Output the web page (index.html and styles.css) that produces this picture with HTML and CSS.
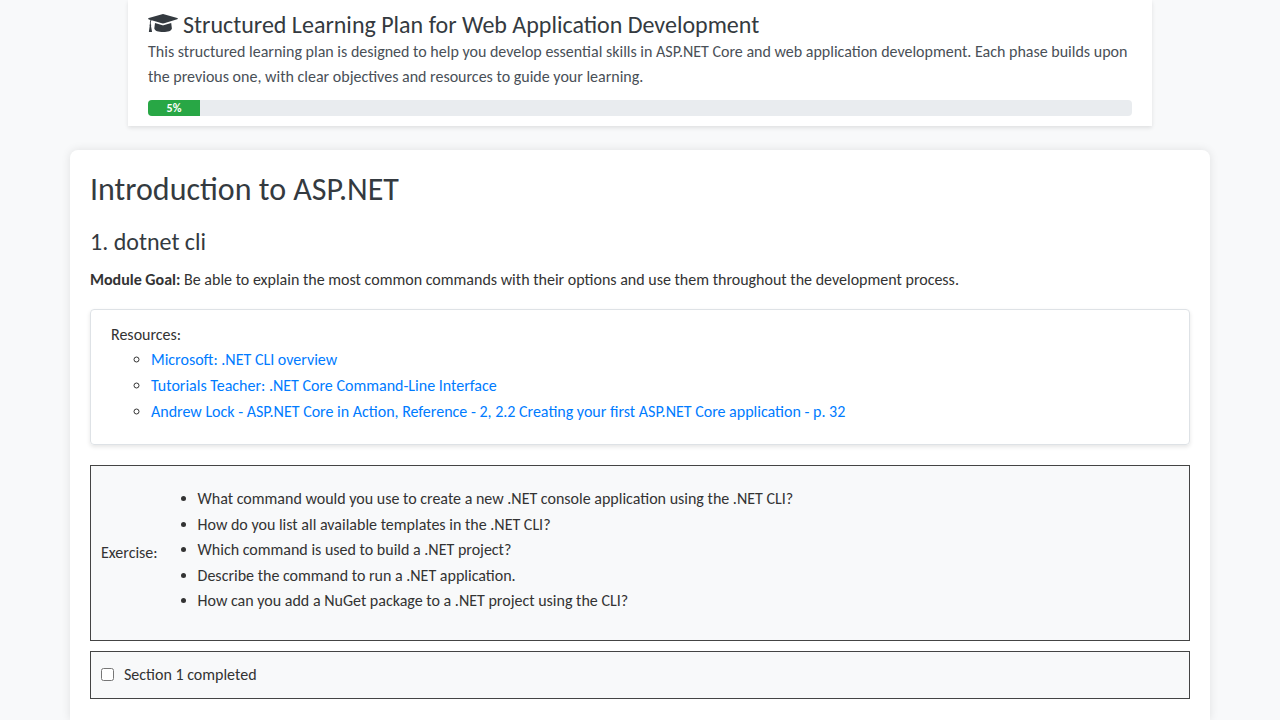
FILE: index.html
```html
<!DOCTYPE html>
<html lang="en">
<head>
<meta charset="utf-8">
<title>Structured Learning Plan</title>
<link rel="stylesheet" href="styles.css">
</head>
<body>
<header class="header">
  <h1 class="title"><svg class="cap" viewBox="0 0 30 20" aria-hidden="true"><g fill="currentColor"><path d="M14.100.2Q15 0 15.900.2L29.200 4.100Q30.500 4.700 29.200 5.300L16.200 9.300Q15 9.600 13.800 9.300L3.600 6.300Q2.900 7 2.800 8.200V10.200Q3.600 10.900 3 11.900L4 17.500Q4 18 3.500 18H1.400Q.8 18 .9 17.500L1.700 11.900Q1.200 10.900 1.900 10.200V8.100Q2 6.900 2.500 6L.8 5.400Q-.5 4.700.8 4.100Z"/><path d="M7 9L13.700 11Q15 11.400 16.300 11L23.200 9 23.900 14.400C23.500 16.700 20 18 15.200 18S6.700 16.700 6.300 14.400Z"/></g></svg><span>Structured Learning Plan for Web Application Development</span></h1>
  <p class="intro"><span class="intro-a">This structured learning plan is designed to help you develop essential skills in ASP.NET Core and web application development. Each phase builds upon</span><br><span class="intro-b">the previous one, with clear objectives and resources to guide your learning.</span></p>
  <div class="progress"><div class="bar">5%</div></div>
</header>
<main class="container">
  <h2 class="section-title"><span>Introduction to ASP.NET</span></h2>
  <h3 class="module-title"><span>1. dotnet cli</span></h3>
  <p class="goal"><strong>Module Goal:</strong> <span>Be able to explain the most common commands with their options and use them throughout the development process.</span></p>
  <section class="card">
    <span class="label">Resources:</span>
    <ul class="resources">
      <li><a>Microsoft: .NET CLI overview</a></li>
      <li><a>Tutorials Teacher: .NET Core Command-Line Interface</a></li>
      <li><a>Andrew Lock - ASP.NET Core in Action, Reference - 2, 2.2 Creating your first ASP.NET Core application - p. 32</a></li>
    </ul>
  </section>
  <section class="box exercise">
    <span class="label">Exercise:</span>
    <ul class="questions">
      <li><span>What command would you use to create a new .NET console application using the .NET CLI?</span></li>
      <li><span>How do you list all available templates in the .NET CLI?</span></li>
      <li><span>Which command is used to build a .NET project?</span></li>
      <li><span>Describe the command to run a .NET application.</span></li>
      <li><span>How can you add a NuGet package to a .NET project using the CLI?</span></li>
    </ul>
  </section>
  <label class="box complete"><input type="checkbox"><span>Section 1 completed</span></label>
</main>
</body>
</html>
```
FILE: styles.css
```css
* { box-sizing: border-box; }
body { margin: 0; background: #f8f9fa; color: #333; font: 16px/25.6px Calibri, Carlito, Lato, sans-serif; }
h1, h2, h3, p, ul { margin: 0; font-weight: 400; }
.header { width: 1024px; height: 126px; margin: 0 auto; padding: 10px 20px; background: #fff; color: #343a40; box-shadow: 0 2px 4px rgba(0,0,0,.1); }
.title { display: flex; align-items: center; gap: 5px; height: 29px; font-size: 24px; line-height: 29px; white-space: nowrap; }
.cap { width: 30px; height: 20px; margin-bottom: 1px; }
.intro { height: 51px; color: #495057; line-height: 25.4px; white-space: nowrap; }
.progress { height: 16px; margin-top: 10px; border-radius: 4px; background: #e9ecef; overflow: hidden; }
.bar { width: 52px; height: 16px; background: #28a745; color: #fff; font-size: 12px; font-weight: 700; line-height: 16px; text-align: center; }
.container { width: 1140px; height: 570px; margin: 24px auto 0; padding: 20px; border-radius: 8px 8px 0 0; background: #fff; box-shadow: 0 0 10px rgba(0,0,0,.1); white-space: nowrap; }
.section-title { padding-top: 1px; color: #343a40; font-size: 32px; line-height: 38.4px; }
.module-title { margin-top: 19px; color: #343a40; font-size: 24px; line-height: 28.8px; }
.goal { margin-top: 10px; }
.goal strong { font-weight: 700; }
.card { height: 136px; margin-top: 16px; padding: 12px 20px; border: 1px solid #dee2e6; border-radius: 4px; box-shadow: 0 2px 4px rgba(0,0,0,.1); }
.resources { padding-left: 40px; list-style: circle; }
.resources a { color: #007bff; }
.box { display: flex; align-items: center; padding: 0 10px; border: 1px solid #444; background: #f8f9fa; }
.exercise { height: 176px; margin-top: 20px; }
.questions { margin: -5.400px 0 0; padding-left: 40px; }
.complete { height: 48px; margin-top: 10px; }
.complete input { width: 13px; height: 13px; margin: 0 10px 0 0; }
```
